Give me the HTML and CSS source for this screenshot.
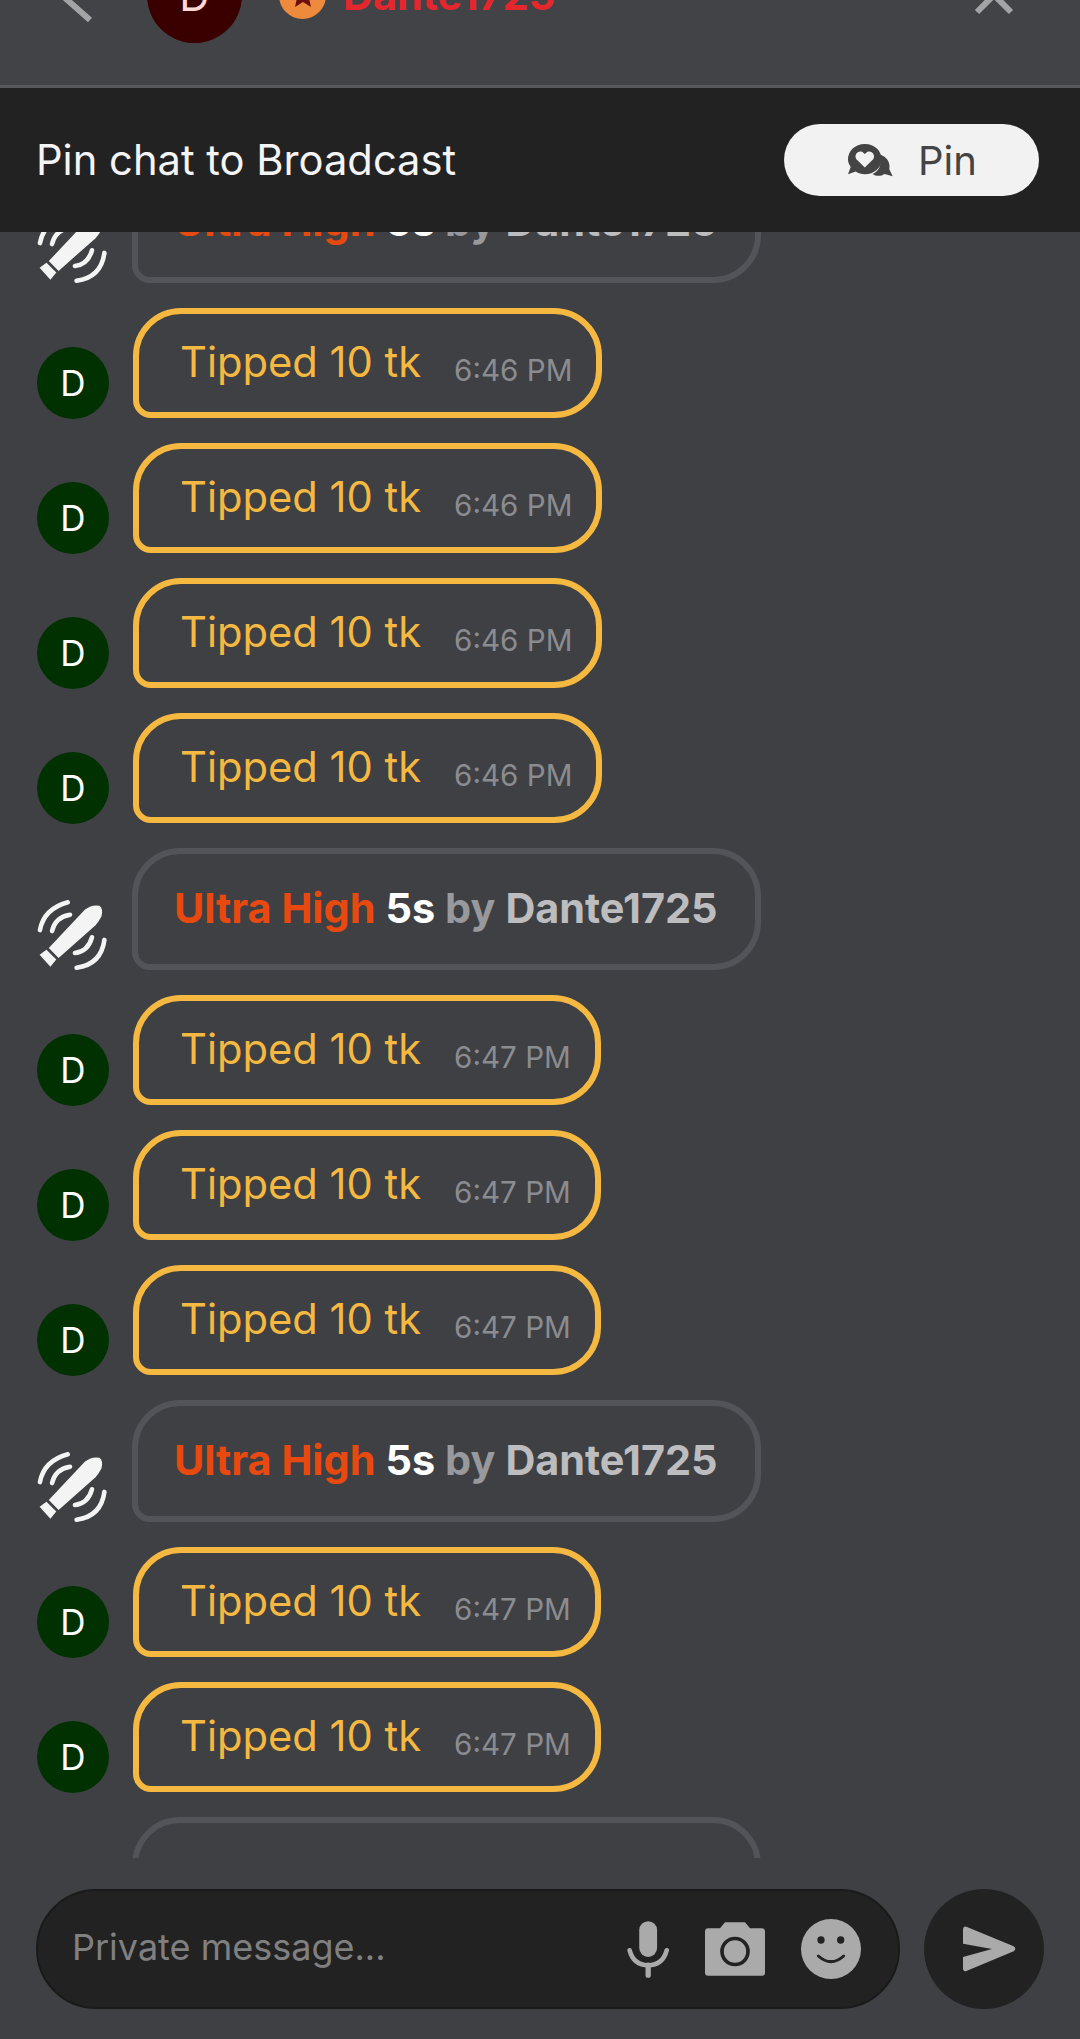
FILE: index.html
```html
<!DOCTYPE html>
<html lang="en">
<head>
    <meta charset="UTF-8">
    <meta name="viewport" content="width=device-width, initial-scale=1.0">
    <title>Private chat</title>
    <link rel="stylesheet" href="styles.css">
</head>
<body>
  <svg class="defs" width="0" height="0">
    <symbol id="vibe" viewBox="50 55 215 220">
      <path d="M85 205 L195 88 Q218 70 240 76 Q252 85 246 108 Q240 122 228 135 L115 235 Z" fill="#f4f4f4"/>
      <path d="M57 225 L78 210 L108 240 L90 262 Z" fill="#f4f4f4"/>
      <g fill="none" stroke="#f4f4f4" stroke-width="14" stroke-linecap="round">
        <path d="M58 150 Q70 85 143 65"/>
        <path d="M95 153 Q105 110 150 103"/>
        <path d="M165 220 Q205 215 217 172"/>
        <path d="M170 265 Q245 255 255 180"/>
      </g>
    </symbol>
  </svg>

  <div class="topbar">
    <div class="topbar-row">
      <svg class="back" width="40" height="60" viewBox="0 0 40 60"><path d="M38 52 L4 22" fill="none" stroke="#a3a4a6" stroke-width="6"/></svg>
      <div class="user-avatar">D</div>
      <div class="badge">
        <svg width="28" height="28" viewBox="0 0 28 28"><path d="M14 2 L18 10 L27 11 L20 17 L22 26 L14 21 L6 26 L8 17 L1 11 L10 10 Z" fill="#6b0f0f"/></svg>
      </div>
      <span class="user-name">Dante1725</span>
      <svg class="close" width="40" height="40" viewBox="0 0 40 40"><path d="M3 3 L37 37 M37 3 L3 37" fill="none" stroke="#a3a4a6" stroke-width="6"/></svg>
    </div>
  </div>

  <div class="pinbar">
    <span class="pinbar-text">Pin chat to Broadcast</span>
    <button class="pin-btn">
      <svg width="45" height="33" viewBox="235 97 134 98">
        <path d="M330 128 C350 135 362 150 358 172 L368 193 L344 186 C332 194 318 193 308 186 C325 180 338 160 330 128 Z" fill="#444"/>
        <path fill-rule="evenodd" d="M285 97 C315 97 335 118 335 143 C335 168 312 187 285 187 C275 187 266 184 258 179 L235 187 L243 165 C238 158 235 151 235 143 C235 118 256 97 285 97 Z M285 167 L310 142 C318 130 306 115 293 120 L285 127 L277 120 C264 115 252 130 260 142 Z" fill="#444"/>
      </svg>
      Pin
    </button>
  </div>

  <div class="messages">
    <div class="message-list">
      <div class="row"><svg class="vibe-icon"><use href="#vibe"/></svg><div class="bubble-ultra"><span class="lvl">Ultra High</span> <span class="secs">5s</span> <span class="by">by</span> <span class="who">Dante1725</span></div></div>

      <div class="row"><div class="avatar">D</div><div class="bubble-tip"><span class="tip-text">Tipped 10 tk</span><span class="time">6:46 PM</span></div></div>
      <div class="row"><div class="avatar">D</div><div class="bubble-tip"><span class="tip-text">Tipped 10 tk</span><span class="time">6:46 PM</span></div></div>
      <div class="row"><div class="avatar">D</div><div class="bubble-tip"><span class="tip-text">Tipped 10 tk</span><span class="time">6:46 PM</span></div></div>
      <div class="row"><div class="avatar">D</div><div class="bubble-tip"><span class="tip-text">Tipped 10 tk</span><span class="time">6:46 PM</span></div></div>

      <div class="row"><svg class="vibe-icon"><use href="#vibe"/></svg><div class="bubble-ultra"><span class="lvl">Ultra High</span> <span class="secs">5s</span> <span class="by">by</span> <span class="who">Dante1725</span></div></div>

      <div class="row"><div class="avatar">D</div><div class="bubble-tip"><span class="tip-text">Tipped 10 tk</span><span class="time">6:47 PM</span></div></div>
      <div class="row"><div class="avatar">D</div><div class="bubble-tip"><span class="tip-text">Tipped 10 tk</span><span class="time">6:47 PM</span></div></div>
      <div class="row"><div class="avatar">D</div><div class="bubble-tip"><span class="tip-text">Tipped 10 tk</span><span class="time">6:47 PM</span></div></div>

      <div class="row"><svg class="vibe-icon"><use href="#vibe"/></svg><div class="bubble-ultra"><span class="lvl">Ultra High</span> <span class="secs">5s</span> <span class="by">by</span> <span class="who">Dante1725</span></div></div>

      <div class="row"><div class="avatar">D</div><div class="bubble-tip"><span class="tip-text">Tipped 10 tk</span><span class="time">6:47 PM</span></div></div>
      <div class="row"><div class="avatar">D</div><div class="bubble-tip"><span class="tip-text">Tipped 10 tk</span><span class="time">6:47 PM</span></div></div>

      <div class="row"><svg class="vibe-icon"><use href="#vibe"/></svg><div class="bubble-ultra"><span class="lvl">Ultra High</span> <span class="secs">5s</span> <span class="by">by</span> <span class="who">Dante1725</span></div></div>
    </div>
  </div>

  <div class="composer">
    <div class="input-wrap">
      <input class="msg-input" type="text" placeholder="Private message...">
      <svg class="ic-mic" width="42" height="57" viewBox="80 147 127 171">
        <rect x="117" y="147" width="54" height="108" rx="27" fill="#aaa"/>
        <path d="M88 235 Q100 280 144 280 Q188 280 200 235" fill="none" stroke="#aaa" stroke-width="14" stroke-linecap="round"/>
        <path d="M144 280 V310" stroke="#aaa" stroke-width="16" stroke-linecap="round"/>
      </svg>
      <svg class="ic-cam" width="60" height="54" viewBox="315 157 180 161">
        <path d="M360 175 L375 157 H435 L450 175 H485 Q495 175 495 185 V308 Q495 318 485 318 H325 Q315 318 315 308 V185 Q315 175 325 175 Z" fill="#aaa"/>
        <circle cx="405" cy="245" r="39" fill="none" stroke="#222" stroke-width="11"/>
      </svg>
      <svg class="ic-smile" width="60" height="60" viewBox="603 147 180 180">
        <circle cx="693" cy="237" r="90" fill="#aaa"/>
        <circle cx="663" cy="210" r="11" fill="#222"/>
        <circle cx="722" cy="210" r="11" fill="#222"/>
        <path d="M655 258 Q693 292 731 258" fill="none" stroke="#222" stroke-width="9" stroke-linecap="round"/>
      </svg>
    </div>
    <button class="send-btn">
      <svg width="53" height="46" viewBox="1093 169 159 138"><path d="M1093 178 Q1095 168 1105 172 L1245 230 Q1255 237 1245 245 L1105 303 Q1095 308 1093 298 L1093 262 L1180 238 L1093 222 Z" fill="#aaa"/></svg>
    </button>
  </div>
</body>
</html>
```

FILE: styles.css
```css
* {
    box-sizing: border-box;
}

body {
    margin: 0;
    height: 100vh;
    display: flex;
    flex-direction: column;
    overflow: hidden;
    background-color: #3f4044;
    font-family: 'Inter', 'Liberation Sans', sans-serif;
}

.defs {
    position: absolute;
}

/* header, scrolled partly off the top */
.topbar {
    height: 88px;
    flex-shrink: 0;
    overflow: hidden;
    background-color: #414347;
    border-bottom: 3px solid #56585b;
}

.topbar-row {
    display: flex;
    align-items: center;
    height: 96px;
    margin-top: -53px;
    padding-left: 52px;
    padding-right: 66px;
}

.back {
    margin-top: 6px;
}

.user-avatar {
    width: 95px;
    height: 95px;
    margin-left: 55px;
    border-radius: 50%;
    background-color: #3a0000;
    color: #ffd8d8;
    font-size: 42px;
    display: flex;
    align-items: center;
    justify-content: center;
    flex-shrink: 0;
}

.badge {
    width: 47px;
    height: 47px;
    margin-left: 37px;
    border-radius: 50%;
    background-color: #ee8a3c;
    display: flex;
    align-items: center;
    justify-content: center;
}

.user-name {
    margin-left: 17px;
    color: #e5262c;
    font-size: 41.4px;
    font-weight: 700;
}

.close {
    margin-left: auto;
    margin-top: 0;
}

/* pin strip */
.pinbar {
    height: 144px;
    flex-shrink: 0;
    position: relative;
    z-index: 1;
    background-color: #222222;
    display: flex;
    align-items: center;
    justify-content: space-between;
    padding: 0 41px 0 36px;
}

.pinbar-text {
    color: #f4f4f4;
    font-size: 41.7px;
}

.pin-btn {
    width: 255px;
    height: 72px;
    border: none;
    border-radius: 36px;
    background-color: #f2f2f2;
    color: #444444;
    font-family: inherit;
    font-size: 40px;
    display: flex;
    align-items: center;
    justify-content: center;
    gap: 25px;
    padding: 0 10px 0 12px;
}

/* chat list */
.messages {
    flex: 1;
    overflow: hidden;
}

.message-list {
    display: flex;
    flex-direction: column;
    gap: 25px;
    margin-top: -71px;
    padding-left: 37px;
}

.row {
    display: flex;
    align-items: flex-end;
    gap: 24px;
}

.avatar {
    width: 72px;
    height: 72px;
    margin-bottom: -1px;
    border-radius: 50%;
    background-color: #013001;
    color: #ffffff;
    font-size: 35px;
    display: flex;
    align-items: center;
    justify-content: center;
    flex-shrink: 0;
}

.vibe-icon {
    width: 71px;
    height: 72px;
    margin-bottom: -1px;
    flex-shrink: 0;
}

.bubble-tip {
    height: 110px;
    display: flex;
    align-items: baseline;
    gap: 33px;
    padding: 23px 24px 0 41px;
    border: 6px solid #f5b942;
    border-radius: 48px 48px 48px 18px;
}

.tip-text {
    color: #f5b942;
    font-size: 41.7px;
}

.time {
    color: #8b8c90;
    font-size: 29.6px;
    position: relative;
    top: 4px;
}

.bubble-ultra {
    height: 122px;
    display: flex;
    align-items: center;
    gap: 10px;
    padding: 0 37px 3px 36px;
    border: 6px solid #53545a;
    border-radius: 48px 48px 48px 18px;
    font-size: 41.4px;
    font-weight: 700;
}

.lvl {
    color: #e8490f;
}

.secs {
    color: #ffffff;
}

.by {
    color: #98999c;
}

.who {
    color: #bdbdbf;
}

/* bottom input */
.composer {
    height: 181px;
    flex-shrink: 0;
    display: flex;
    gap: 24px;
    padding: 31px 36px 30px 36px;
    background-color: #3f4044;
    position: relative;
}

.input-wrap {
    flex: 1;
    min-width: 0;
    display: flex;
    align-items: center;
    padding: 0 37px 0 34px;
    background-color: #222222;
    border: 2px solid #1a1a1a;
    border-radius: 60px;
}

.msg-input {
    flex: 1;
    min-width: 0;
    border: none;
    outline: none;
    background: transparent;
    padding: 0 0 5px 0;
    font-family: inherit;
    font-size: 36px;
    color: #808080;
}

.msg-input::placeholder {
    color: #808080;
    opacity: 1;
}

.ic-mic {
    flex-shrink: 0;
}

.ic-cam {
    margin-left: 36px;
    flex-shrink: 0;
}

.ic-smile {
    margin-left: 36px;
    flex-shrink: 0;
}

.send-btn {
    width: 120px;
    height: 120px;
    flex-shrink: 0;
    border: none;
    border-radius: 50%;
    background-color: #222222;
    display: flex;
    align-items: center;
    justify-content: center;
    padding: 0 0 0 10px;
}
```
